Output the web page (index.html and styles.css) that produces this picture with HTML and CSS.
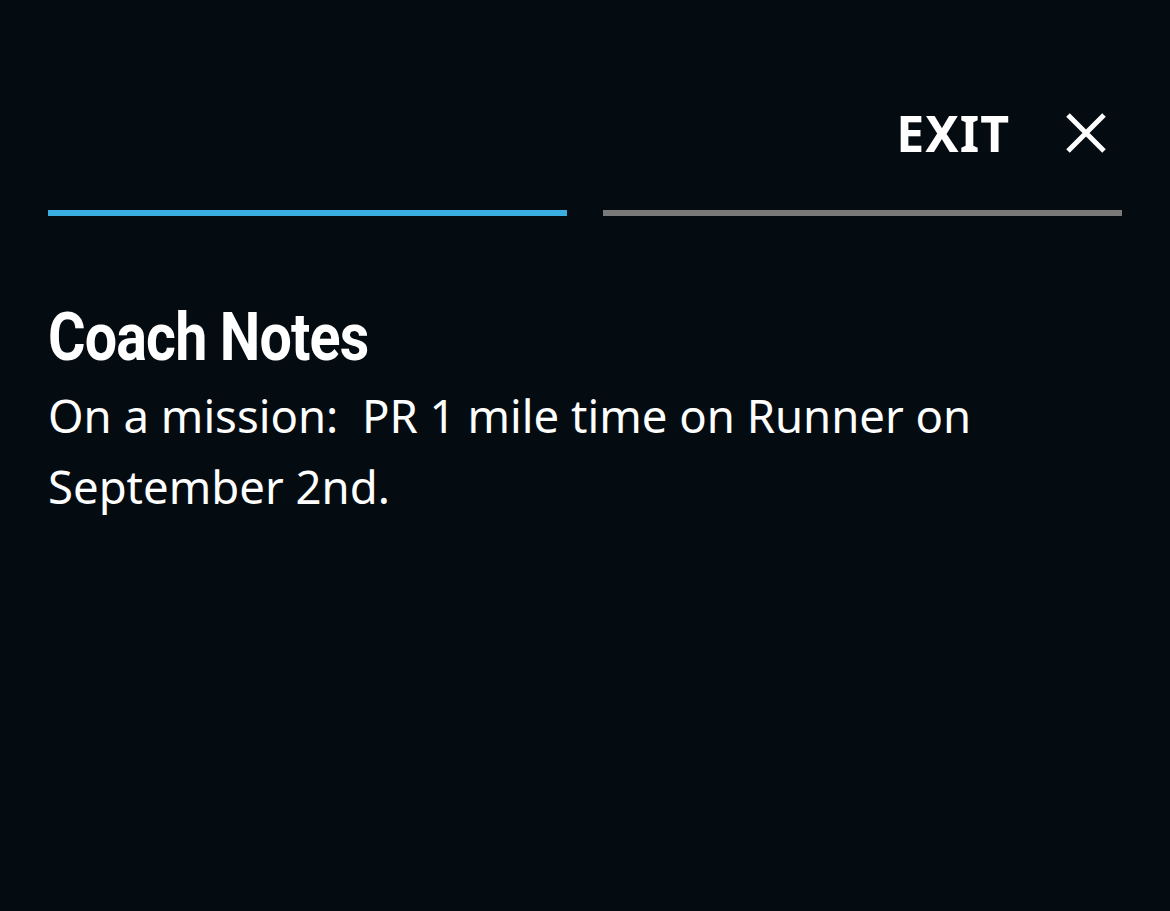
FILE: index.html
```html
<!DOCTYPE html>
<html lang="en">
<head>
  <meta charset="UTF-8" />
  <title>Coach Notes</title>
  <link rel="stylesheet" href="styles.css">
</head>
<body>
  <!-- Top bar -->
  <div class="topbar">
    <div class="exit">
      <span>EXIT</span>
      <svg class="close" width="42" height="42" viewBox="0 0 42 42">
        <path d="M3 3 L39 39 M39 3 L3 39" stroke="#fff" stroke-width="5" fill="none"/>
      </svg>
    </div>
  </div>

  <!-- Progress -->
  <div class="progress">
    <div class="step done"></div>
    <div class="step"></div>
  </div>

  <!-- Content -->
  <div class="content">
    <div class="title"><span>Coach Notes</span></div>
    <div class="note">On a mission:&nbsp; PR 1 mile time on Runner on September 2nd.</div>
  </div>
</body>
</html>
```

FILE: styles.css
```css
body {
  margin: 0;
  background: #040c12;
  color: #fff;
  font-family: "Noto Sans", sans-serif;
  height: 911px;
}

.topbar {
  display: flex;
  justify-content: flex-end;
  padding: 99px 63px 0 0;
}

.exit {
  display: flex;
  align-items: center;
  gap: 55px;
  font-size: 50px;
  font-weight: bold;
  letter-spacing: 1px;
}

.close {
  display: block;
}

.progress {
  display: flex;
  gap: 36px;
  padding: 0 48px;
  margin-top: 43px;
}

.step {
  flex: 1;
  height: 6px;
  background: #7a7a7a;
}

.step.done {
  background: #3aaee0;
}

.content {
  padding: 82px 48px 0;
}

.title {
  font-family: Roboto, sans-serif;
  font-size: 66px;
  font-weight: bold;
  letter-spacing: -1px;
  line-height: 80px;
}

.title span {
  display: inline-block;
  transform: scaleX(0.87);
  transform-origin: left;
}

.note {
  margin-top: 2px;
  font-size: 45.5px;
  line-height: 71px;
  max-width: 1000px;
}
```
